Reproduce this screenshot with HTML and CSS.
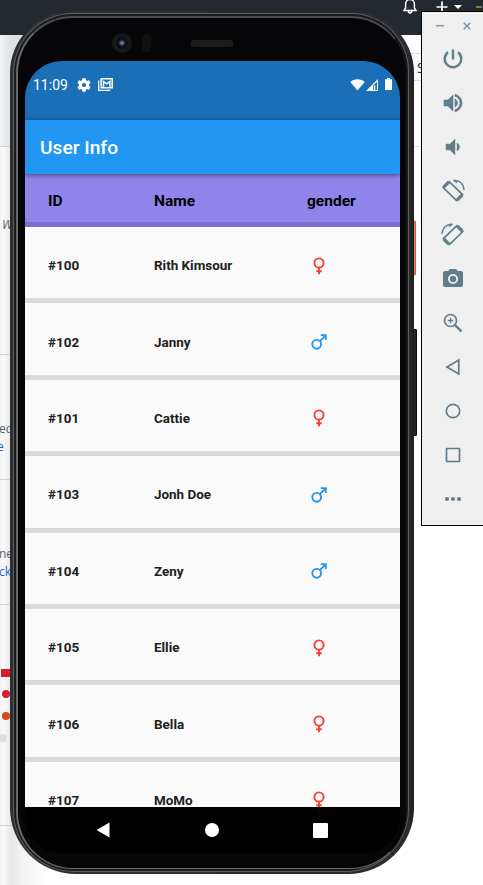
FILE: index.html
```html
<!DOCTYPE html>
<html lang="en">
<head>
<meta charset="utf-8">
<title>User Info</title>
<link rel="stylesheet" href="styles.css">
</head>
<body>
<svg width="0" height="0" class="defs">
  <symbol id="female" viewBox="0 0 16 18"><g fill="none" stroke="#f44336" stroke-width="1.900"><circle cx="8" cy="6" r="4.600"/><path d="M8 10.600v6.600M5.200 14.300h5.600"/></g></symbol>
  <symbol id="male" viewBox="0 0 16 18"><g fill="none" stroke="#2196f3" stroke-width="1.900"><circle cx="5.700" cy="11.300" r="4.400"/><path d="M8.800 8.200L14.400 2.600M9.800 2.100h5v5"/></g></symbol>
</svg>
<div class="desktop">
  <header class="topbar">
    <svg class="bell" width="16" height="18" viewBox="0 0 16 18" fill="none" stroke="#fff" stroke-width="1.500"><path d="M2 12.600L3.600 9.800V6a4.400 4.400 0 0 1 8.800 0v3.800L14 12.600zM6.300 13a1.700 1.900 0 0 0 3.400 0"/></svg>
    <svg class="plus" width="12" height="12" viewBox="0 0 12 12" stroke="#fff" stroke-width="1.700"><path d="M6 .5v11M.5 6h11"/></svg>
    <svg width="8" height="4" viewBox="0 0 8 4" fill="#fff"><path d="M0 0h8L4 4z"/></svg>
    <i class="avatar"></i>
  </header>
  <main class="page">
    <section class="s1"></section>
    <section class="s2"><em>W</em></section>
    <section class="s3"><span>ed</span><a>e</a></section>
    <section class="s3 s4"><span>ne</span><a>ck</a></section>
    <section class="s5"><i class="sq"></i><i class="dot"></i><i class="dot orange"></i><i class="dot pale"></i></section>
  </main>
  <aside class="sidefield">S</aside>
  <i class="sideline"></i>
</div>

<i class="key power"></i>
<i class="key volume"></i>
<div class="phone"><div class="ring"><div class="bezel">
  <div class="sensors">
    <i class="lens"></i><i class="sensor"></i><i class="speaker"></i>
  </div>
  <div class="screen">
    <div class="status">
      <span>11:09</span>
      <svg class="gear" width="14" height="14" viewBox="2 2 20 20" fill="#fff"><path d="M19.140 12.940c.04-.3.06-.61.06-.94 0-.32-.02-.64-.07-.94l2.030-1.580c.18-.14.23-.41.12-.61l-1.920-3.320c-.12-.22-.37-.29-.59-.22l-2.390.96c-.5-.38-1.030-.7-1.620-.94l-.36-2.540c-.04-.24-.24-.41-.48-.41h-3.840c-.24 0-.43.17-.47.41l-.36 2.540c-.59.24-1.130.57-1.620.94l-2.390-.96c-.22-.08-.47 0-.59.22L2.740 8.870c-.12.21-.08.47.12.61l2.030 1.580c-.05.3-.09.63-.09.94s.02.64.07.94l-2.030 1.580c-.18.14-.23.41-.12.61l1.920 3.320c.12.22.37.29.59.22l2.390-.96c.5.38 1.030.7 1.620.94l.36 2.540c.05.24.24.41.48.41h3.840c.24 0 .44-.17.47-.41l.36-2.540c.59-.24 1.130-.56 1.620-.94l2.390.96c.22.08.47 0 .59-.22l1.920-3.320c.12-.22.07-.47-.12-.61l-2.010-1.580zM12 15a3 3 0 1 1 0-6 3 3 0 0 1 0 6z"/></svg>
      <svg class="mail" width="15" height="13" viewBox="0 0 15 13" fill="none" stroke="#fff"><path stroke-width="1.300" d="M.7 2.500v9.800h11.600"/><path stroke-width="1.500" d="M3.200.8h11v8.900h-11z"/><path stroke-width="1.500" d="M5.500 8.800V3.500l3.200 2.300 3.200-2.300v5.300"/></svg>
      <svg class="wifi" width="15" height="12" viewBox="0 0 15 12" fill="#fff"><path d="M7.500 11.500L.3 2.900C4-.5 11-.5 14.700 2.900z"/></svg>
      <svg class="cell" width="12" height="12" viewBox="0 0 12 12"><path fill="#fff" d="M0 12L12 0v12z"/><path fill="#1a6fb7" d="M7.200 6.500L11 2.700V11H7.200z"/><path fill="#fff" d="M8 6.500h1.300V11H8z"/></svg>
      <svg class="battery" width="7" height="12" viewBox="0 0 7 12" fill="#fff"><path d="M2 0h3v1.300h2V12H0V1.300h2z"/></svg>
    </div>
    <h1 class="appbar">User Info</h1>
    <div class="row head"><b>ID</b><b>Name</b><b>gender</b></div>
    <div class="list">
      <div class="row"><b>#100</b><b>Rith Kimsour</b><svg><use href="#female"/></svg></div>
      <div class="row"><b>#102</b><b>Janny</b><svg><use href="#male"/></svg></div>
      <div class="row"><b>#101</b><b>Cattie</b><svg><use href="#female"/></svg></div>
      <div class="row"><b>#103</b><b>Jonh Doe</b><svg><use href="#male"/></svg></div>
      <div class="row"><b>#104</b><b>Zeny</b><svg><use href="#male"/></svg></div>
      <div class="row"><b>#105</b><b>Ellie</b><svg><use href="#female"/></svg></div>
      <div class="row"><b>#106</b><b>Bella</b><svg><use href="#female"/></svg></div>
      <div class="row"><b>#107</b><b>MoMo</b><svg><use href="#female"/></svg></div>
    </div>
    <nav class="nav">
      <svg width="14" height="16" viewBox="0 0 14 16" fill="#fff"><path d="M13.500.5v15L.5 8z"/></svg>
      <svg width="14" height="14" viewBox="0 0 14 14" fill="#fff"><circle cx="7" cy="7" r="7"/></svg>
      <svg width="15" height="15" viewBox="0 0 15 15" fill="#fff"><rect width="15" height="15" rx="1"/></svg>
    </nav>
  </div>
</div></div></div>

<div class="tools">
  <div class="winbtns">
    <svg width="8" height="8" viewBox="0 0 8 8"><path d="M0 3.800h8"/></svg>
    <svg width="8" height="8" viewBox="0 0 8 8"><path d="M.7.700l6.600 6.600M7.300.7L.7 7.300"/></svg>
  </div>
  <div class="tool"><svg viewBox="0 0 24 24"><path class="line thick" d="M12 2.500v10M7 5.300a8.300 8.300 0 1 0 10 0"/></svg></div>
  <div class="tool"><svg viewBox="0 0 24 24"><path stroke="#607d8b" stroke-width=".6" d="M3 9v6h4l5 5V4L7 9H3zm13.500 3c0-1.770-1.020-3.290-2.500-4.030v8.050c1.480-.73 2.500-2.250 2.500-4.020zM14 3.230v2.060c2.890.86 5 3.540 5 6.710s-2.110 5.850-5 6.710v2.060c4.010-.91 7-4.490 7-8.770s-2.990-7.860-7-8.770z"/></svg></div>
  <div class="tool"><svg viewBox="0 0 24 24"><path stroke="#607d8b" stroke-width=".4" d="M18.500 12c0-1.770-1.020-3.290-2.500-4.030v8.050c1.480-.73 2.500-2.250 2.500-4.020zM5 9v6h4l5 5V4L9 9H5z"/></svg></div>
  <div class="tool"><svg viewBox="0 0 24 24"><g id="rotate"><path class="line" d="M8.200 2.600L21.600 15.600l-6 6L2.200 8.600z"/><path class="line heavy" d="M2.600 8.200L7.800 3M16 21.200L21.200 16"/><path class="line thin" d="M12.500 1.300c6-.5 10.300 4 10.500 9.700M12.500 1.300l3.600 2.400"/></g></svg></div>
  <div class="tool"><svg viewBox="0 0 24 24"><use href="#rotate" transform="matrix(-1 0 0 1 24 0)"/></svg></div>
  <div class="tool"><svg viewBox="0 0 24 24"><path fill-rule="evenodd" d="M9 2L7.170 4H4c-1.100 0-2 .9-2 2v12c0 1.100.9 2 2 2h16c1.100 0 2-.9 2-2V6c0-1.100-.9-2-2-2h-3.170L15 2H9zm3 15a5 5 0 1 1 0-10 5 5 0 0 1 0 10z"/><circle cx="12" cy="12" r="3.200"/></svg></div>
  <div class="tool"><svg viewBox="0 0 24 24"><circle class="line" cx="9.500" cy="9.500" r="6"/><path class="line thick" d="M14 14l6.500 6.500"/><path class="line thin" d="M9.500 6.700v5.600M6.700 9.500h5.600"/></svg></div>
  <div class="tool"><svg viewBox="0 0 24 24"><path class="line" d="M17.800 5v14L6 12z"/></svg></div>
  <div class="tool"><svg viewBox="0 0 24 24"><circle class="line" cx="12" cy="12" r="6.700"/></svg></div>
  <div class="tool"><svg viewBox="0 0 24 24"><rect class="line" x="5.500" y="5.500" width="13" height="13" rx=".5"/></svg></div>
  <div class="tool"><svg viewBox="0 0 24 24"><circle cx="6" cy="12" r="2"/><circle cx="12" cy="12" r="2"/><circle cx="18" cy="12" r="2"/></svg></div>
</div>
</body>
</html>
```
FILE: styles.css
```css
* { box-sizing: border-box; }
body { margin: 0; width: 483px; height: 885px; position: relative; overflow: hidden; background: #fff; font-family: Roboto, sans-serif; }
svg { display: block; flex: none; }
.defs { position: absolute; }

/* window behind the emulator */
.desktop { height: 885px; }
.topbar { height: 35px; background: #24292f; display: flex; align-items: flex-start; padding-left: 402px; }
.bell { margin-top: -2px; }
.plus { margin: 1px 6px 0 18px; }
.plus + svg { margin-top: 5px; }
.avatar { width: 6px; height: 2px; margin: 6px 0 0 14px; background: #827f2c; }
.page { width: 60px; height: 850px; background: linear-gradient(90deg, #f1f1f1 0, #fafafa 3px, #e6e7e8 11px, #f4f4f4 24px, #fff 50px); font: 12px/18px "Open Sans", sans-serif; color: #57606a; }
.page section { border-bottom: 1px solid #cdd1d6; overflow: hidden; }
.s1 { height: 112px; background: linear-gradient(90deg, #f2f3f5, #dfe1e4 11px); }
.s2 { height: 208px; padding: 69px 0 0 2px; }
.s3 { height: 125px; padding-top: 65px; }
.page .s3 span, .s3 a { display: block; margin-left: -1px; }
.s3 a { color: #0969da; }
.page .s3:not(.s4) a { margin-left: -3px; }
.s5 { height: 221px; display: flex; flex-direction: column; padding: 64px 0 0 1px; }
.sq { width: 10px; height: 8px; background: #cf222e; }
.dot { width: 8px; height: 8px; border-radius: 50%; margin: 13px 0 0 1px; background: #cf222e; }
.dot.orange { background: #dd4814; margin-top: 14px; }
.dot.pale { background: #ddd; margin: 14px 0 0 -2px; }
.sidefield { position: absolute; left: 400px; top: 53px; width: 40px; height: 28px; padding-left: 17px; background: #fafbfc; border: solid #d5d8dc; border-width: 1px 0; font: 14px/27px "Open Sans", sans-serif; color: #24292f; }
.sideline { position: absolute; left: 400px; top: 146px; width: 30px; height: 1px; background: #e1e4e8; }

/* device */
.key { position: absolute; }
.power { left: 410px; top: 221px; width: 6px; height: 54px; background: #ec8066; border: solid #d9573d; border-width: 1px 1px 1px 0; }
.volume { left: 410px; top: 329px; width: 7px; height: 107px; background: #242424; border-radius: 1px; border: 1px solid #0b0b0b; }
.phone { position: absolute; left: 10px; top: 11px; width: 404px; height: 863px; padding: 2px 5px 2px 3px; border-radius: 62px 62px 66px 66px; background: linear-gradient(90deg, #2c2e2f 0 50%, #2b2b2d 50% 98.700%, #1d1d1f); }
.ring { height: 100%; padding: 2px 1px 2px 2px; border: 1px solid #5d5f61; border-right-color: #5c5d61; border-radius: 60px 58px 63px 61px; background: #1a1b1c; }
.bezel { position: relative; height: 100%; padding: 43px 6px 18px 7px; border: solid #67696a; border-width: 2px 1px 1px 2px; border-right-color: #17181a; border-top-color: #4b4c4d; border-radius: 57px; background: #060608; }
.sensors { position: absolute; left: 94px; top: 15px; display: flex; align-items: center; }
.lens { width: 20px; height: 20px; border-radius: 50%; background: radial-gradient(circle, #69789e 0 1px, #181c2c 3px, #060608 5px, #17181a 6px 9px, #0c0c0e); }
.sensor { width: 9px; height: 18px; margin-left: 10px; border-radius: 4px; background: #101011; }
.speaker { width: 42px; height: 7px; margin-left: 40px; border-radius: 3px; background: #1b1b1b; }
.screen { width: 375px; height: 792px; border-radius: 37px; overflow: hidden; background: #000; }
.status { height: 59px; padding: 17px 7px 0 8px; display: flex; align-items: flex-start; background: #1a6fb7; color: #fff; font-size: 14px; line-height: 15px; }
.status span { width: 44px; }
.mail { margin: 0 auto 0 7px; }
.wifi { margin-top: 1px; }
.cell { margin: 1px 7px 0 1px; }
.battery { margin: 0 1px 0 0; }
.appbar { position: relative; height: 54px; margin: 0; padding-left: 15px; background: #2196f3; color: #fff; font: 500 19.200px/56px Roboto, sans-serif; box-shadow: 0 1px 5px rgba(0,0,0,.5); }
.row { display: grid; grid-template-columns: 106px 153px 1fr; align-items: center; height: 76.400px; padding-left: 23px; border-bottom: 5px solid #dadada; background: #fafafa; color: #202020; font-size: 13.450px; }
.row b { font-weight: 700; padding-top: 6px; }
.row > svg { width: 16px; height: 18px; margin: 6px 0 0 4px; }
.row.head { height: 53px; background: #9083ea; border-bottom-color: #7b6dcb; color: #000; font-size: 15.500px; }
.head b { padding-top: 5px; }
.list { height: 580px; overflow: hidden; }
.nav { height: 46px; display: flex; align-items: center; justify-content: space-between; padding: 0 72px 0 71px; background: #000; }

/* emulator controls */
.tools { position: absolute; left: 421px; top: 11px; width: 63px; height: 515px; border: 1px solid #000; background: #efefef; }
.winbtns { height: 25px; display: flex; gap: 19px; padding: 10px 0 0 14px; }
.winbtns path { stroke: #76909c; stroke-width: 1.400; fill: none; }
.tool { height: 44px; padding-left: 19px; display: flex; align-items: center; }
.tool svg { width: 24px; height: 24px; fill: #607d8b; overflow: visible; }
.line { fill: none; stroke: #607d8b; stroke-width: 1.700; }
.thick { stroke-width: 2.400; }
.heavy { stroke-width: 3.200; }
.thin { stroke-width: 1.300; }
```
